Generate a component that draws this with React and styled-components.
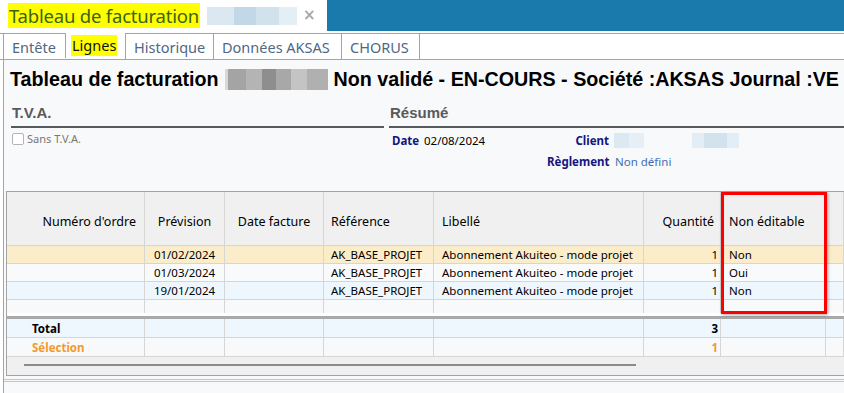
import React from "react";
import styled, { createGlobalStyle } from "styled-components";

const Global = createGlobalStyle`
  html, body { margin: 0; padding: 0; background: #ffffff; }
  body { font-family: "Noto Sans", "Open Sans", sans-serif; width: 844px; height: 393px; overflow: hidden; }
  * { box-sizing: border-box; }
`;

const Page = styled.div`
  width: 844px;
  height: 393px;
  display: flex;
  flex-direction: column;
  overflow: hidden;
`;

const TopBar = styled.div`
  height: 31px;
  display: flex;
  flex: none;
`;

const TitleArea = styled.div`
  width: 327px;
  display: flex;
  align-items: center;
  padding-left: 8px;
  background: #fff;
`;

const TitleMark = styled.span`
  background: #ffff00;
  color: #3a6412;
  font-size: 18.5px;
  line-height: 25px;
  height: 25px;
  padding: 0 1px 0 1px;
  letter-spacing: -0.2px;
`;

const Blur = styled.span`
  display: inline-block;
  width: ${(p) => p.$w}px;
  height: ${(p) => p.$h}px;
  background: ${(p) => p.$bg};
  flex: none;
`;

const CloseX = styled.span`
  color: #a8a8a8;
  font-size: 15px;
  font-weight: bold;
  margin-left: 6px;
  line-height: 1;
  font-family: "DejaVu Sans", sans-serif;
`;

const BlueFill = styled.div`
  flex: 1;
  background: #1a7aab;
`;

const TabBar = styled.div`
  margin-top: 2px;
  height: 27px;
  border-top: 1px solid #a4a4a4;
  border-bottom: 1px solid #a4a4a4;
  display: flex;
  padding-left: 3px;
  flex: none;
  background: #fff;
`;

const Tab = styled.div`
  width: ${(p) => p.$w}px;
  height: 25px;
  margin-top: ${(p) => (p.$active ? "-1px" : "0")};
  padding-left: ${(p) => p.$pad || 8}px;
  border-left: 1px solid #a4a4a4;
  border-right: ${(p) => (p.$last ? "1px solid #a4a4a4" : "none")};
  display: flex;
  align-items: center;
  font-size: 14.5px;
  color: #4f6885;
  background: #fff;
  white-space: nowrap;
`;

const ActiveLabel = styled.span`
  background: #ffff00;
  color: #111;
  line-height: 21px;
  padding: 0 1px;
`;

const Content = styled.div`
  flex: 1;
  margin-left: 3px;
  border-left: 1px solid #a4a4a4;
  background: #f8f9fb;
  display: flex;
  flex-direction: column;
`;

const Heading = styled.h1`
  margin: 0;
  padding: 5px 0 0 6px;
  height: 33px;
  font-family: "Liberation Sans", Arial, sans-serif;
  font-weight: bold;
  font-size: 19.7px;
  color: #000;
  white-space: nowrap;
  display: flex;
  align-items: center;
`;

const HeadBlur = styled.span`
  display: inline-block;
  width: 103px;
  height: 21px;
  margin: 0 6px 0 6px;
  background: linear-gradient(90deg, #d8d8d8 0 3%, #a4a4a4 3% 20%, #b4b4b4 20% 36%, #8e8e8e 36% 50%, #a8a8a8 50% 64%, #c4c4c4 64% 80%, #b0b0b0 80% 100%);
`;

const Sections = styled.div`
  display: grid;
  grid-template-columns: 373px 1fr;
  column-gap: 5px;
  padding: 10px 0 0 7px;
  height: 98px;
`;

const Section = styled.div`
  display: flex;
  flex-direction: column;
`;

const SectionTitle = styled.div`
  font-family: "Liberation Sans", Arial, sans-serif;
  font-weight: bold;
  font-size: 15px;
  color: #5a5a5a;
  height: 25px;
  padding-left: 1px;
  border-bottom: 2px solid #555a5f;
  line-height: 19px;
`;

const CheckRow = styled.label`
  display: flex;
  align-items: center;
  gap: 3px;
  margin-top: 3px;
  padding-left: 1px;
  font-size: 11px;
  color: #777;
`;

const Box = styled.span`
  width: 12px;
  height: 12px;
  border: 1px solid #b4b4b4;
  border-radius: 2px;
  background: #fff;
`;

const Summary = styled.div`
  display: grid;
  grid-template-columns: 32px 123px 62px 1fr;
  row-gap: 4px;
  padding: 4px 0 0 3px;
  font-size: 11.5px;
  align-items: center;
`;

const Lbl = styled.span`
  font-weight: bold;
  color: #151580;
  text-align: ${(p) => (p.$right ? "right" : "left")};
  height: 17px;
  line-height: 17px;
  white-space: nowrap;
`;

const Val = styled.span`
  color: ${(p) => p.$color || "#000"};
  padding-left: ${(p) => p.$pl || 0}px;
  height: 17px;
  line-height: 17px;
  display: flex;
  align-items: center;
  white-space: nowrap;
`;

const GridWrap = styled.div`
  position: relative;
  margin-left: 2px;
  border: 1px solid #a4a4a4;
  border-right: none;
  background: #f8f9fb;
`;

const Row = styled.div`
  display: grid;
  grid-template-columns: 138px 80px 99px 110px 210px 77px 105px 1fr;
  height: ${(p) => p.$h}px;
  background: ${(p) => p.$bg || "#f8f9fb"};
  border-bottom: ${(p) => (p.$noline ? "none" : "1px solid #d6d6d6")};
`;

const Cell = styled.div`
  border-right: 1px solid #d6d6d6;
  display: flex;
  align-items: center;
  justify-content: ${(p) => (p.$align === "right" ? "flex-end" : p.$align === "center" ? "center" : "flex-start")};
  padding: 0 ${(p) => p.$pr ?? 7}px 0 ${(p) => p.$pl ?? 7}px;
  font-size: ${(p) => (p.$head ? 12.5 : 11.5)}px;
  font-weight: ${(p) => (p.$bold ? "bold" : "normal")};
  color: ${(p) => p.$color || "#000"};
  white-space: nowrap;
  overflow: hidden;
  padding-top: ${(p) => (p.$head ? 6 : 0)}px;
`;

const ThickLine = styled.div`
  height: 6px;
  border-top: 3px solid #ffffff;
  border-bottom: 3px solid #a9a9a9;
`;

const ScrollArea = styled.div`
  height: 18px;
  background: #f0f0f0;
  padding: 7px 0 0 17px;
`;

const Thumb = styled.div`
  width: 612px;
  height: 2px;
  background: #8a8a8a;
`;

const Highlight = styled.div`
  position: absolute;
  left: 714px;
  top: 0px;
  width: 106px;
  height: 122px;
  border: 3px solid #ff0000;
  box-shadow: 1px 1px 3px rgba(0, 0, 0, 0.35);
  pointer-events: none;
`;

const BottomSep = styled.div`
  margin-top: 3px;
  height: 3px;
  border-top: 1px solid #c4c4c4;
  border-bottom: 1px solid #c4c4c4;
`;

const cols = [
  { key: "num", label: "Numéro d'ordre", align: "right", pr: 8 },
  { key: "prev", label: "Prévision", align: "center" },
  { key: "date", label: "Date facture", align: "center" },
  { key: "ref", label: "Référence", align: "left" },
  { key: "lib", label: "Libellé", align: "left", pl: 8 },
  { key: "qty", label: "Quantité", align: "right", pr: 6 },
  { key: "ne", label: "Non éditable", align: "left", pl: 8 },
  { key: "x", label: "", align: "left" },
];

const rows = [
  { prev: "01/02/2024", ref: "AK_BASE_PROJET", lib: "Abonnement Akuiteo - mode projet", qty: "1", ne: "Non", bg: "#fcedca" },
  { prev: "01/03/2024", ref: "AK_BASE_PROJET", lib: "Abonnement Akuiteo - mode projet", qty: "1", ne: "Oui", bg: "#f8fafc" },
  { prev: "19/01/2024", ref: "AK_BASE_PROJET", lib: "Abonnement Akuiteo - mode projet", qty: "1", ne: "Non", bg: "#eef6fe" },
];

const tabs = [
  { label: "Entête", w: 62 },
  { label: "Lignes", w: 60, active: true },
  { label: "Historique", w: 88 },
  { label: "Données AKSAS", w: 128 },
  { label: "CHORUS", w: 79, last: true },
];

const dataPad = (c) => {
  if (c.key === "qty") return { pr: 2, pl: 4 };
  if (c.key === "ne") return { pl: 8, pr: 4 };
  if (c.key === "lib") return { pl: 8, pr: 4 };
  return { pl: 7, pr: 7 };
};

export default function App() {
  return (
    <Page>
      <Global />
      <TopBar>
        <TitleArea>
          <TitleMark>Tableau de facturation</TitleMark>
          <Blur $w={90} $h={18} style={{ marginLeft: 7 }} $bg="linear-gradient(90deg, #dbe8f1 0 30%, #c3d8e6 30% 55%, #d2e2ed 55% 80%, #e4eef5 80% 100%)" />
          <CloseX>×</CloseX>
        </TitleArea>
        <BlueFill />
      </TopBar>
      <TabBar>
        {tabs.map((t) => (
          <Tab key={t.label} $w={t.w} $active={t.active} $last={t.last} $pad={t.active ? 5 : 8}>
            {t.active ? <ActiveLabel>{t.label}</ActiveLabel> : t.label}
          </Tab>
        ))}
      </TabBar>
      <Content>
        <Heading>
          Tableau de facturation
          <HeadBlur />
          Non validé - EN-COURS - Société :AKSAS Journal :VE
        </Heading>
        <Sections>
          <Section>
            <SectionTitle>T.V.A.</SectionTitle>
            <CheckRow>
              <Box />
              Sans T.V.A.
            </CheckRow>
          </Section>
          <Section>
            <SectionTitle>Résumé</SectionTitle>
            <Summary>
              <Lbl>Date</Lbl>
              <Val>02/08/2024</Val>
              <Lbl $right>Client</Lbl>
              <Val $pl={5}>
                <Blur $w={30} $h={15} $bg="linear-gradient(90deg, #dde9f2 0 50%, #e6eff6 50%)" />
                <Blur $w={47} $h={15} style={{ marginLeft: 48 }} $bg="linear-gradient(90deg, #e3edf5 0 25%, #d3e3ee 25% 75%, #e3edf5 75%)" />
              </Val>
              <span />
              <span />
              <Lbl $right>Règlement</Lbl>
              <Val $pl={6} $color="#3f6fb3">Non défini</Val>
            </Summary>
          </Section>
        </Sections>
        <GridWrap>
          <Row $h={54} $bg="#f0f0f0">
            {cols.map((c) => (
              <Cell key={c.key} $head $align={c.align} $pr={c.pr} $pl={c.pl}>
                {c.label}
              </Cell>
            ))}
          </Row>
          {rows.map((r, i) => (
            <Row key={i} $h={18} $bg={r.bg}>
              {cols.map((c) => {
                const p = dataPad(c);
                return (
                  <Cell key={c.key} $align={c.key === "prev" ? "center" : c.key === "qty" ? "right" : "left"} $pl={p.pl} $pr={p.pr}>
                    {r[c.key] || ""}
                  </Cell>
                );
              })}
            </Row>
          ))}
          <Row $h={13} $noline>
            {cols.map((c) => (
              <Cell key={c.key} />
            ))}
          </Row>
          <ThickLine />
          <Row $h={19} $bg="#eef6fe">
            {cols.map((c) => (
              <Cell key={c.key} $bold $align={c.key === "qty" ? "right" : "left"} $pl={c.key === "num" ? 25 : 4} $pr={2}>
                {c.key === "num" ? "Total" : c.key === "qty" ? "3" : ""}
              </Cell>
            ))}
          </Row>
          <Row $h={19}>
            {cols.map((c) => (
              <Cell key={c.key} $bold $color="#f39a2e" $align={c.key === "qty" ? "right" : "left"} $pl={c.key === "num" ? 25 : 4} $pr={2}>
                {c.key === "num" ? "Sélection" : c.key === "qty" ? "1" : ""}
              </Cell>
            ))}
          </Row>
          <ScrollArea>
            <Thumb />
          </ScrollArea>
          <Highlight />
        </GridWrap>
        <BottomSep />
      </Content>
    </Page>
  );
}
